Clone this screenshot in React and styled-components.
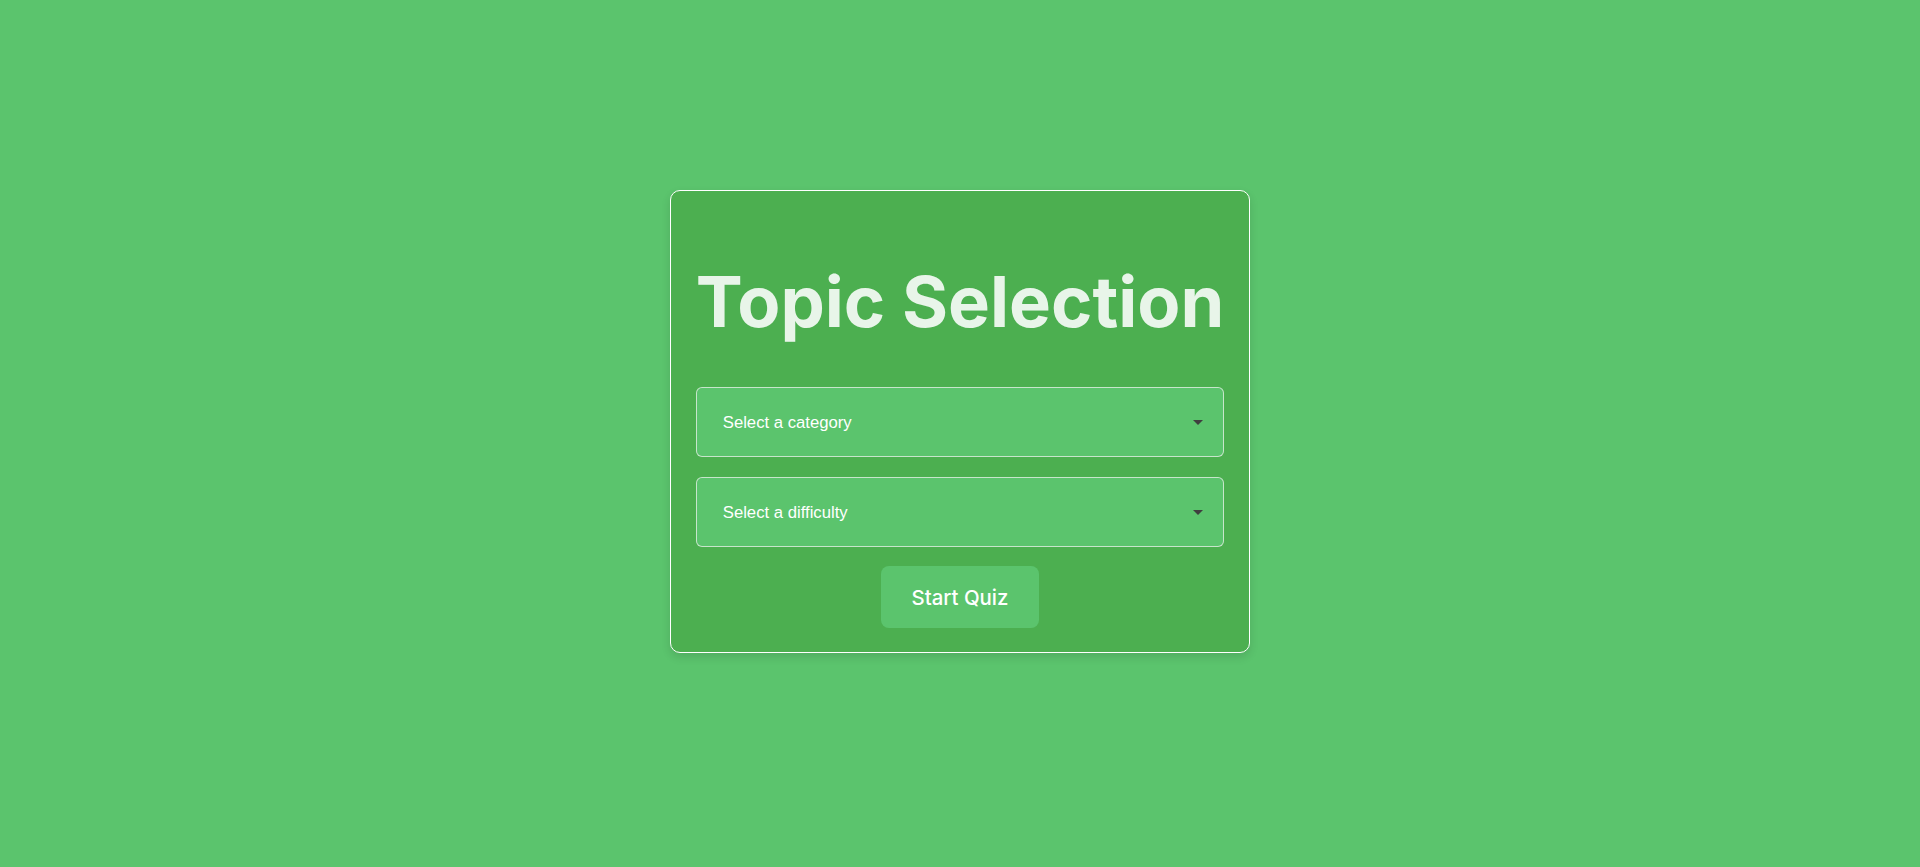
import React from "react";
import styled, { createGlobalStyle } from "styled-components";

const GlobalStyle = createGlobalStyle`
  html, body {
    margin: 0;
    padding: 0;
    background: #5bc46d;
    font-family: Inter, "Noto Sans", sans-serif;
  }
`;

const Page = styled.main`
  min-height: 100vh;
  box-sizing: border-box;
  padding-bottom: 24px;
  display: flex;
  align-items: center;
  justify-content: center;
`;

const Card = styled.section`
  box-sizing: border-box;
  width: fit-content;
  padding: 24px 25px;
  background: #4caf50;
  border: 1px solid #ffffff;
  border-radius: 10px;
  box-shadow: 0 4px 10px rgba(0, 0, 0, 0.12);
  display: flex;
  flex-direction: column;
  align-items: stretch;
`;

const Title = styled.h1`
  margin: 44px 0 43px;
  font-family: Inter, sans-serif;
  font-size: 70.4px;
  font-weight: 700;
  color: #e8f5e9;
  text-align: center;
  white-space: nowrap;
`;

const SelectWrap = styled.div`
  position: relative;
  margin-bottom: 20px;
`;

const Select = styled.select`
  appearance: none;
  -webkit-appearance: none;
  display: block;
  width: 100%;
  box-sizing: border-box;
  height: 70px;
  padding: 0 40px 0 26px;
  background-color: #5bc46d;
  color: #ffffff;
  border: 1px solid rgba(235, 240, 235, 0.75);
  border-radius: 6px;
  font-family: "Liberation Sans", Arial, sans-serif;
  font-size: 16.7px;
  outline: none;
`;

const Arrow = styled.svg`
  position: absolute;
  right: 21px;
  top: 50%;
  width: 10px;
  height: 5px;
  margin-top: -2px;
  pointer-events: none;
`;

const Button = styled.button`
  align-self: center;
  width: 158px;
  height: 62px;
  margin-top: -1px;
  border: none;
  border-radius: 8px;
  background: #5bc46d;
  color: #ffffff;
  font-family: Inter, sans-serif;
  font-size: 20.4px;
  font-weight: 500;
  cursor: pointer;
`;

function Dropdown({ placeholder, options }) {
  return (
    <SelectWrap>
      <Select defaultValue="">
        <option value="">{placeholder}</option>
        {options.map((o) => (
          <option key={o} value={o}>
            {o}
          </option>
        ))}
      </Select>
      <Arrow viewBox="0 0 10 5" aria-hidden="true">
        <path d="M0 0 L10 0 L5 5 Z" fill="#3f3f3f" />
      </Arrow>
    </SelectWrap>
  );
}

export default function App() {
  return (
    <>
      <GlobalStyle />
      <Page>
        <Card>
          <Title>Topic Selection</Title>
          <Dropdown
            placeholder="Select a category"
            options={["General Knowledge", "Science & Nature", "History"]}
          />
          <Dropdown
            placeholder="Select a difficulty"
            options={["Easy", "Medium", "Hard"]}
          />
          <Button>Start Quiz</Button>
        </Card>
      </Page>
    </>
  );
}
